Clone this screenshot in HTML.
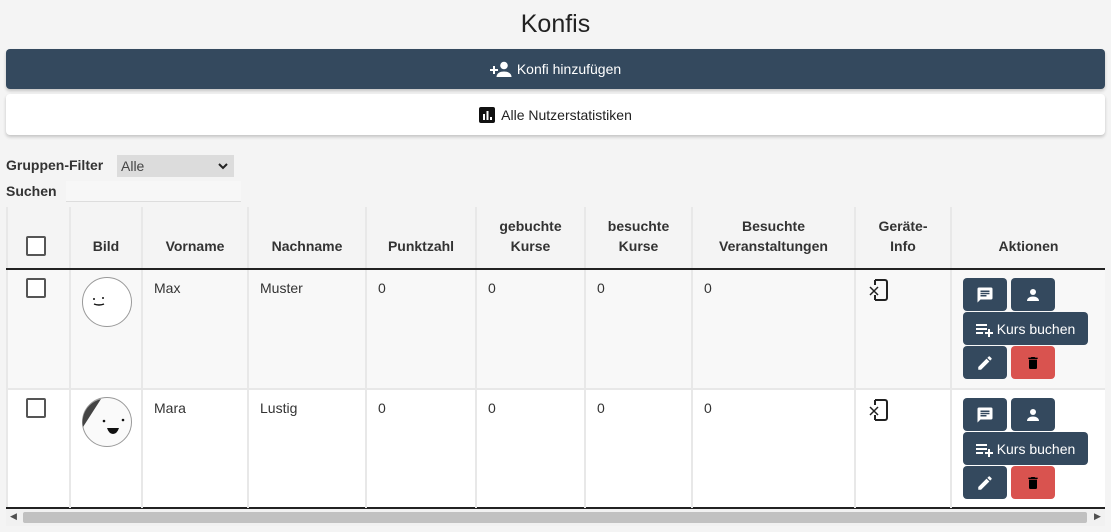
<!DOCTYPE html>
<html><head><meta charset="utf-8"><style>
*{box-sizing:border-box;margin:0;padding:0}
body{width:1111px;height:532px;overflow:hidden;background:#f4f4f4;font-family:"Liberation Sans",sans-serif;color:#333;position:relative}
.a{position:absolute}
h1{position:absolute;top:10px;width:100%;text-align:center;font-weight:400;font-size:25px;color:#222}
.btn1{left:6px;top:49px;width:1099px;height:40px;background:#34495e;border-radius:4px;color:#fff;font-size:14px;display:flex;align-items:center;justify-content:center;gap:5px;box-shadow:0 2px 3px rgba(0,0,0,.2)}
.btn2{left:6px;top:94px;width:1099px;height:41px;background:#fff;border-radius:4px;color:#222;font-size:14px;display:flex;align-items:center;justify-content:center;gap:6px;box-shadow:0 2px 3px rgba(0,0,0,.2)}
.lbl{font-weight:bold;font-size:14px;color:#333}
.cell{position:absolute;border-right:2px solid #e8e8e8;font-size:14px}
.th{font-weight:bold;text-align:center;display:flex;align-items:flex-end;justify-content:center;padding-bottom:12px;line-height:20px;font-size:14px;color:#333}
.td{padding:10px 11px;color:#333}
.cb{position:absolute;width:20px;height:20px;border:2px solid #555;border-radius:2px;background:#fff}
.ab{position:absolute;width:44px;height:33px;border-radius:4px;background:#34495e;display:flex;align-items:center;justify-content:center}
.kb{position:absolute;width:125px;height:33px;border-radius:4px;background:#34495e;color:#fff;font-size:14px;display:flex;align-items:center;justify-content:center;gap:3px}
</style></head><body>
<h1>Konfis</h1>
<div class="a btn1"><svg width="22" height="16" viewBox="0 0 22 16"><path d="M3 5v3H0v2h3v3h2v-3h3V8H5V5z" fill="#fff"/><circle cx="14" cy="4.5" r="3.8" fill="#fff"/><path d="M6.5 16c0-4 4-5.5 7.5-5.5s7.5 1.5 7.5 5.5z" fill="#fff"/></svg>Konfi hinzufügen</div>
<div class="a btn2"><svg width="16" height="16" viewBox="0 0 16 16"><rect width="16" height="16" rx="2" fill="#111"/><rect x="4" y="7" width="2" height="6" fill="#fff"/><rect x="7.5" y="4" width="2" height="9" fill="#fff"/><rect x="11" y="10" width="2" height="3" fill="#fff"/></svg>Alle Nutzerstatistiken</div>
<div class="a lbl" style="left:6px;top:157px">Gruppen-Filter</div>
<div class="a" style="left:117px;top:155px;width:117px;height:22px;background:#dcdcdc;font-size:14px;padding:3px 4px;color:#444">Alle<svg style="position:absolute;right:6px;top:8px" width="10" height="7" viewBox="0 0 10 7"><path d="M1 1l4 4 4-4" stroke="#222" stroke-width="2" fill="none"/></svg></div>
<div class="a lbl" style="left:6px;top:183px">Suchen</div>
<div class="a" style="left:66px;top:181px;width:175px;height:21px;background:#f7f7f7;border-bottom:1px solid #ddd"></div>

<div class="a" style="left:6px;top:207px;width:1099px;height:61px;background:#f4f4f4;border-left:2px solid #e8e8e8"></div>
<div class="a" style="left:6px;top:268px;width:1099px;height:2px;background:#222"></div>
<div class="a" style="left:6px;top:270px;width:1099px;height:118px;background:#f8f8f8;border-left:2px solid #e8e8e8"></div>
<div class="a" style="left:6px;top:388px;width:1099px;height:2px;background:#e8e8e8"></div>
<div class="a" style="left:6px;top:390px;width:1099px;height:118px;background:#fff;border-left:2px solid #e8e8e8"></div>
<div class="a" style="left:6px;top:507px;width:1099px;height:2px;background:#222"></div>

<div class="cell th" style="left:8px;top:207px;width:63px;height:61px"></div>
<div class="cb" style="left:26px;top:236px"></div>
<div class="cell th" style="left:71px;top:207px;width:72px;height:61px">Bild</div>
<div class="cell th" style="left:143px;top:207px;width:106px;height:61px">Vorname</div>
<div class="cell th" style="left:249px;top:207px;width:118px;height:61px">Nachname</div>
<div class="cell th" style="left:367px;top:207px;width:110px;height:61px">Punktzahl</div>
<div class="cell th" style="left:477px;top:207px;width:109px;height:61px">gebuchte<br>Kurse</div>
<div class="cell th" style="left:586px;top:207px;width:107px;height:61px">besuchte<br>Kurse</div>
<div class="cell th" style="left:693px;top:207px;width:163px;height:61px">Besuchte<br>Veranstaltungen</div>
<div class="cell th" style="left:856px;top:207px;width:96px;height:61px">Geräte-<br>Info</div>
<div class="cell th" style="left:952px;top:207px;width:153px;height:61px;border-right:none">Aktionen</div>

<div class="cell" style="left:8px;top:270px;width:63px;height:118px"></div>
<div class="cell" style="left:71px;top:270px;width:72px;height:238px"></div>
<div class="cell td" style="left:143px;top:270px;width:106px;height:118px">Max</div>
<div class="cell td" style="left:249px;top:270px;width:118px;height:118px">Muster</div>
<div class="cell td" style="left:367px;top:270px;width:110px;height:118px">0</div>
<div class="cell td" style="left:477px;top:270px;width:109px;height:118px">0</div>
<div class="cell td" style="left:586px;top:270px;width:107px;height:118px">0</div>
<div class="cell td" style="left:693px;top:270px;width:163px;height:118px">0</div>
<div class="cell" style="left:856px;top:270px;width:96px;height:238px"></div>
<div class="cell" style="left:8px;top:390px;width:63px;height:118px"></div>
<div class="cell td" style="left:143px;top:390px;width:106px;height:118px">Mara</div>
<div class="cell td" style="left:249px;top:390px;width:118px;height:118px">Lustig</div>
<div class="cell td" style="left:367px;top:390px;width:110px;height:118px">0</div>
<div class="cell td" style="left:477px;top:390px;width:109px;height:118px">0</div>
<div class="cell td" style="left:586px;top:390px;width:107px;height:118px">0</div>
<div class="cell td" style="left:693px;top:390px;width:163px;height:118px">0</div>
<div class="cb" style="left:26px;top:278px"></div>
<div class="cb" style="left:26px;top:398px"></div>

<svg class="a" style="left:81px;top:277px" width="52" height="52" viewBox="0 0 52 52"><circle cx="26" cy="25" r="24.5" fill="#fff" stroke="#999"/><path d="M3 31a24 24 0 0 0 46 0a24 24 0 0 1-46 0z" fill="#444"/><circle cx="13" cy="22" r="1" fill="#111"/><circle cx="22" cy="21" r="1" fill="#111"/><path d="M13 27q5 2 10 0" stroke="#111" stroke-width="1.4" fill="none"/></svg>
<svg class="a" style="left:81px;top:397px" width="52" height="52" viewBox="0 0 52 52"><circle cx="26" cy="25" r="24.5" fill="#fafafa" stroke="#999"/><path d="M20 2A24 24 0 0 0 2 30z" fill="#444"/><circle cx="23" cy="24" r="1.3" fill="#111"/><circle cx="42" cy="23" r="1.3" fill="#111"/><path d="M26 31h12q-2 6-6 6t-6-6z" fill="#111"/></svg>

<svg class="a" style="left:869px;top:279px" width="20" height="22" viewBox="0 0 20 22"><path d="M6 1h10a2 2 0 0 1 2 2v16a2 2 0 0 1-2 2H6M6 1v5M6 16v5" stroke="#222" stroke-width="2" fill="none"/><path d="M1 8l8 8M9 8l-8 8" stroke="#222" stroke-width="1.5"/></svg>
<svg class="a" style="left:869px;top:399px" width="20" height="22" viewBox="0 0 20 22"><path d="M6 1h10a2 2 0 0 1 2 2v16a2 2 0 0 1-2 2H6M6 1v5M6 16v5" stroke="#222" stroke-width="2" fill="none"/><path d="M1 8l8 8M9 8l-8 8" stroke="#222" stroke-width="1.5"/></svg>

<div class="ab" style="left:963px;top:278px"><svg width="18" height="18" viewBox="0 0 24 24"><path d="M20 2H4a2 2 0 0 0-2 2v18l4-4h14a2 2 0 0 0 2-2V4a2 2 0 0 0-2-2zM6 9h12v2H6zm8 5H6v-2h8zm4-6H6V6h12z" fill="#fff"/></svg></div>
<div class="ab" style="left:1011px;top:278px"><svg width="18" height="18" viewBox="0 0 24 24"><circle cx="12" cy="8" r="4" fill="#fff"/><path d="M4 20c0-4 4-6 8-6s8 2 8 6z" fill="#fff"/></svg></div>
<div class="kb" style="left:963px;top:312px"><svg width="18" height="16" viewBox="0 0 18 16"><path d="M0 3h11v2H0zM0 7h11v2H0zM0 11h7v2H0zM12 8h2v3h3v2h-3v3h-2v-3H9v-2h3z" fill="#fff"/></svg>Kurs buchen</div>
<div class="ab" style="left:963px;top:346px"><svg width="18" height="18" viewBox="0 0 24 24"><path d="M3 17.25V21h3.75L17.8 9.94l-3.75-3.75zM20.7 7.04a1 1 0 0 0 0-1.41l-2.34-2.34a1 1 0 0 0-1.41 0l-1.83 1.830 3.75 3.75z" fill="#fff"/></svg></div>
<div class="ab" style="left:1011px;top:346px;background:#d9534f"><svg width="16" height="18" viewBox="0 0 24 24"><path d="M6 19a2 2 0 0 0 2 2h8a2 2 0 0 0 2-2V7H6zM19 4h-3.5l-1-1h-5l-1 1H5v2h14z" fill="#000"/></svg></div>
<div class="ab" style="left:963px;top:398px"><svg width="18" height="18" viewBox="0 0 24 24"><path d="M20 2H4a2 2 0 0 0-2 2v18l4-4h14a2 2 0 0 0 2-2V4a2 2 0 0 0-2-2zM6 9h12v2H6zm8 5H6v-2h8zm4-6H6V6h12z" fill="#fff"/></svg></div>
<div class="ab" style="left:1011px;top:398px"><svg width="18" height="18" viewBox="0 0 24 24"><circle cx="12" cy="8" r="4" fill="#fff"/><path d="M4 20c0-4 4-6 8-6s8 2 8 6z" fill="#fff"/></svg></div>
<div class="kb" style="left:963px;top:432px"><svg width="18" height="16" viewBox="0 0 18 16"><path d="M0 3h11v2H0zM0 7h11v2H0zM0 11h7v2H0zM12 8h2v3h3v2h-3v3h-2v-3H9v-2h3z" fill="#fff"/></svg>Kurs buchen</div>
<div class="ab" style="left:963px;top:466px"><svg width="18" height="18" viewBox="0 0 24 24"><path d="M3 17.25V21h3.75L17.8 9.94l-3.75-3.75zM20.7 7.04a1 1 0 0 0 0-1.41l-2.34-2.34a1 1 0 0 0-1.41 0l-1.83 1.83 3.75 3.75z" fill="#fff"/></svg></div>
<div class="ab" style="left:1011px;top:466px;background:#d9534f"><svg width="16" height="18" viewBox="0 0 24 24"><path d="M6 19a2 2 0 0 0 2 2h8a2 2 0 0 0 2-2V7H6zM19 4h-3.5l-1-1h-5l-1 1H5v2h14z" fill="#000"/></svg></div>

<div class="a" style="left:6px;top:509px;width:1099px;height:17px;background:#f1f1f1"></div>
<div class="a" style="left:23px;top:512px;width:1064px;height:11px;background:#c1c1c1;border-radius:2px"></div>
<div class="a" style="left:10px;top:511px;font-size:9px;color:#505050">&#9664;</div>
<div class="a" style="left:1094px;top:511px;font-size:9px;color:#505050">&#9654;</div>
</body></html>
